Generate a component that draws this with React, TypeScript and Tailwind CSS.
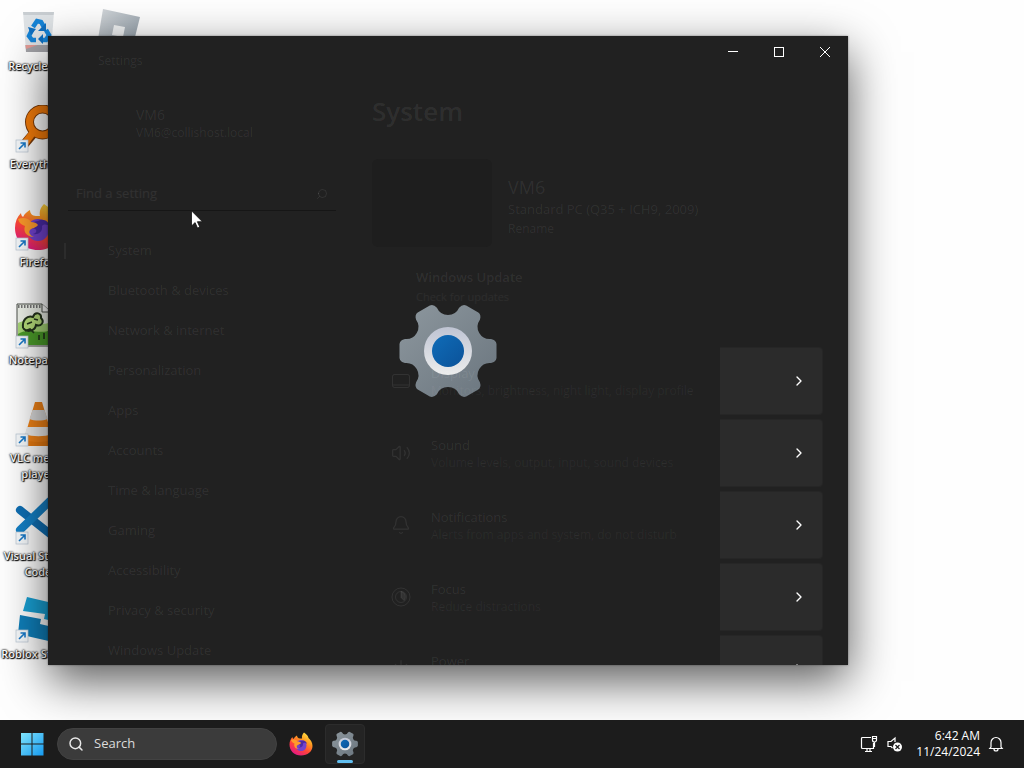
import type { ReactNode } from "react";
import { Bell, ChevronRight, Power, Search, Volume2 } from "lucide-react";

const GEAR_PATH = buildGearPath();

function buildGearPath() {
  const at = (x: number, y: number, turn: number) => {
    const a = (turn * Math.PI) / 3;
    const px = x * Math.cos(a) - y * Math.sin(a);
    const py = x * Math.sin(a) + y * Math.cos(a);
    return `${px.toFixed(2)} ${py.toFixed(2)}`;
  };
  let d = `M${at(43, -12, 0)}`;
  for (let k = 0; k < 6; k++) {
    d += `Q${at(48, -11, k)} ${at(48.5, -7, k)}L${at(48.5, 7, k)}Q${at(48, 11, k)} ${at(43, 12, k)}`;
    d += `A12.2 12.2 0 0 0 ${at(43, -12, k + 1)}`;
  }
  return d + "Z";
}

function Gear({ className, id }: { className: string; id: string }) {
  return (
    <svg viewBox="-49 -49 98 98" className={className} aria-hidden="true">
      <defs>
        <linearGradient id={`${id}-body`} x1="0" y1="0" x2="1" y2="1">
          <stop offset="0" stopColor="#8d979e" />
          <stop offset="1" stopColor="#6a757e" />
        </linearGradient>
        <linearGradient id={`${id}-ring`} x1="0" y1="0" x2="0" y2="1">
          <stop offset="0" stopColor="#bfc4d3" />
          <stop offset="1" stopColor="#eceded" />
        </linearGradient>
        <linearGradient id={`${id}-dot`} x1="0" y1="0" x2="1" y2="1">
          <stop offset="0" stopColor="#0f6cb8" />
          <stop offset="1" stopColor="#0b5299" />
        </linearGradient>
      </defs>
      <path d={GEAR_PATH} fill={`url(#${id}-body)`} />
      <circle r="24" fill={`url(#${id}-ring)`} />
      <circle r="16" fill={`url(#${id}-dot)`} />
    </svg>
  );
}

function Firefox({ className, id }: { className: string; id: string }) {
  return (
    <svg viewBox="0 0 48 48" className={className} aria-hidden="true">
      <defs>
        <linearGradient id={`${id}-fire`} x1="0.85" y1="0" x2="0.25" y2="1">
          <stop offset="0" stopColor="#fff04a" />
          <stop offset="0.35" stopColor="#ff9a20" />
          <stop offset="0.65" stopColor="#ff4538" />
          <stop offset="1" stopColor="#e0148c" />
        </linearGradient>
      </defs>
      <path
        d="M30 1c6 4 8 7 9 11 4 3 8 9 8 16 0 11-10 19-23 19S1 38 1 25c0-6 2-11 6-15 0 2 1 3 2 4 2-4 5-6 7-7 0 3 2 6 6 6h4c-1-5 1-9 4-12z"
        fill={`url(#${id}-fire)`}
      />
      <circle cx="24" cy="27" r="11" fill="#7142cf" />
      <path d="M24 18c5-3 11 0 12 6-3-3-6-3-8-1 1 6-4 9-9 8 4-1 4-4 2-5-3-1-6 0-8 2 0-5 4-9 11-10z" fill="#4b2ba8" />
      <path d="M4 16c5-2 11-1 13 3 3 0 6 1 7 3-2 3-6 3-8 5-2 3 1 6 4 7-8 0-11-6-9-11-3-1-6-3-7-7z" fill="#ff9b2b" />
    </svg>
  );
}

function ShortcutArrow() {
  return (
    <g>
      <rect x="2" y="35" width="12" height="12" fill="#f8fbfd" stroke="#b9c7d3" strokeWidth="0.7" />
      <path d="M5 44l6-6M6.5 38H11v4.500" fill="none" stroke="#1979c8" strokeWidth="1.600" />
    </g>
  );
}

function Glyph({ children }: { children: ReactNode }) {
  return (
    <svg viewBox="0 0 48 48" className="size-12" aria-hidden="true">
      {children}
    </svg>
  );
}

const desktopIcons: { id: string; label?: string; art: ReactNode }[] = [
  {
    id: "recycle",
    label: "Recycle Bin",
    art: (
      <Glyph>
        <path d="M9 5h31l-3 39H12z" fill="#dfe3e6" />
        <path d="M9 5h31l-.5 3H9.500z" fill="#c9ced2" />
        <path d="M11.500 38h26l-.5 7H12z" fill="#a3a3a8" />
        <path d="M11.500 38h12l-11.500 4z" fill="#e39a94" />
        <g fill="none" stroke="#1583d6" strokeWidth="4.500">
          <path d="M19 20l4-6 4 1 3 5" />
          <path d="M32 23l3 5-3 5h-5" />
          <path d="M22 33h-4l-3-4 3-6" />
        </g>
        <path d="M32 16v8h-8zM29 27v10l-5-5zM14 20l8 2-5 6z" fill="#0f6fc0" />
      </Glyph>
    ),
  },
  {
    id: "everything",
    label: "Everything",
    art: (
      <Glyph>
        <path d="M19 29L8 42" stroke="#7a3a08" strokeWidth="9" />
        <circle cx="28.500" cy="17" r="13" fill="none" stroke="#7a3a08" strokeWidth="9" />
        <circle cx="28.500" cy="17" r="13" fill="none" stroke="#f57c0a" strokeWidth="7" />
        <path d="M20 26L9 41" stroke="#f57c0a" strokeWidth="7" />
        <ShortcutArrow />
      </Glyph>
    ),
  },
  {
    id: "firefox",
    label: "Firefox",
    art: (
      <div className="relative">
        <Firefox className="size-12" id="ff-desktop" />
        <svg viewBox="0 0 48 48" className="absolute inset-0 size-12" aria-hidden="true">
          <ShortcutArrow />
        </svg>
      </div>
    ),
  },
  {
    id: "notepad",
    label: "Notepad++",
    art: (
      <Glyph>
        <path d="M3 3h25l9 8v34H3z" fill="#eef2ea" stroke="#4c504a" />
        <path d="M4 27c10-5 22 2 33-3v20H4z" fill="#4c9d2a" />
        <path d="M4 22c9-6 20 5 33-1v8c-12 5-22-3-33 4z" fill="#a9d878" />
        <path d="M4 5.500h24" stroke="#777" strokeWidth="3" strokeDasharray="1.500 1.500" />
        <path d="M28 3v8h9" fill="#fff" stroke="#4c504a" />
        <path d="M9 27c-1-8 4-13 10-11 2-6 9-4 8 1 4 4 0 9-5 7-1 6-9 8-13 3" fill="#b9e07c" stroke="#24331c" strokeWidth="2" />
        <path d="M13 23l5-2M20 18l4 1M11 30l5-2 4 4M25 34v5M30 32v6" stroke="#24331c" strokeWidth="1.600" fill="none" />
        <ShortcutArrow />
      </Glyph>
    ),
  },
  {
    id: "vlc",
    label: "VLC media player",
    art: (
      <Glyph>
        <path d="M9 35h32l5 12H8z" fill="#e77a10" />
        <path d="M21 3h7l11 37c-7 4-23 4-29 0z" fill="#f08318" />
        <path d="M18.500 11h12l3 9c-5 2-13 2-18 0z" fill="#d9d9d9" />
        <path d="M13 28h23l2 7c-7 3-20 3-27 0z" fill="#ededed" />
        <ShortcutArrow />
      </Glyph>
    ),
  },
  {
    id: "vscode",
    label: "Visual Studio Code",
    art: (
      <Glyph>
        <path d="M6 13l34 27" stroke="#0f6fb4" strokeWidth="8" strokeLinecap="round" />
        <path d="M6 33L36 4" stroke="#1480c6" strokeWidth="8" strokeLinecap="round" />
        <path d="M34 2l12 5v34l-12 5z" fill="#2a9df0" />
        <ShortcutArrow />
      </Glyph>
    ),
  },
  {
    id: "roblox-studio",
    label: "Roblox Studio",
    art: (
      <Glyph>
        <path d="M13 2l34 8-4 17-13-3 1-5-22-3z" fill="#18a0d4" />
        <path d="M6 20l21 4-1 5 17 4-4 14-35-8z" fill="#0f7fba" />
        <ShortcutArrow />
      </Glyph>
    ),
  },
  {
    id: "roblox-player",
    art: (
      <Glyph>
        <defs>
          <linearGradient id="player-face" x1="0" y1="0" x2="1" y2="1">
            <stop offset="0" stopColor="#d4d8db" />
            <stop offset="1" stopColor="#8b98a3" />
          </linearGradient>
        </defs>
        <path d="M9 2l37 8-9 36-34-8z" fill="url(#player-face)" />
        <path d="M20 18l11 2-2 10-11-2z" fill="#f2f4f5" />
      </Glyph>
    ),
  },
];

const navItems = [
  "System",
  "Bluetooth & devices",
  "Network & internet",
  "Personalization",
  "Apps",
  "Accounts",
  "Time & language",
  "Gaming",
  "Accessibility",
  "Privacy & security",
  "Windows Update",
];

const lineIcon = "size-5";

const settingRows: { title: string; note?: string; icon: ReactNode }[] = [
  {
    title: "Display",
    note: "Monitors, brightness, night light, display profile",
    icon: (
      <svg viewBox="0 0 20 20" className={lineIcon} fill="none" stroke="currentColor" aria-hidden="true">
        <rect x="1.500" y="3.500" width="17" height="13" rx="2" />
        <path d="M2 14h16" />
      </svg>
    ),
  },
  {
    title: "Sound",
    note: "Volume levels, output, input, sound devices",
    icon: <Volume2 className={lineIcon} strokeWidth={1.5} />,
  },
  {
    title: "Notifications",
    note: "Alerts from apps and system, do not disturb",
    icon: <Bell className={lineIcon} strokeWidth={1.5} />,
  },
  {
    title: "Focus",
    note: "Reduce distractions",
    icon: (
      <svg viewBox="0 0 20 20" className={lineIcon} fill="none" stroke="currentColor" aria-hidden="true">
        <circle cx="10" cy="10" r="9" />
        <circle cx="10" cy="10" r="5.500" />
        <path d="M10 4.500v6l3 3a5.500 5.500 0 0 0-3-9z" fill="currentColor" />
      </svg>
    ),
  },
  { title: "Power", icon: <Power className={lineIcon} strokeWidth={1.5} /> },
];

function WindowButton({ label, children }: { label: string; children: ReactNode }) {
  return (
    <button type="button" aria-label={label} className="grid h-8 w-[46px] place-items-center">
      <svg viewBox="0 0 12 12" className="size-3" fill="none" stroke="#fff">
        {children}
      </svg>
    </button>
  );
}

function SettingsWindow() {
  return (
    <section
      aria-label="Settings"
      className="absolute top-9 right-[176px] bottom-[55px] left-12 flex flex-col overflow-hidden bg-[#212121] text-[13px] text-white/8"
    >
      <div className="absolute inset-0 grid place-items-center">
        <Gear className="size-[98px]" id="gear-splash" />
      </div>

      <header className="relative flex h-12 shrink-0 items-start justify-between pl-[50px]">
        <span className="text-[12px] leading-[50px]">Settings</span>
        <div className="flex">
          <WindowButton label="Minimize">
            <path d="M1 5.500h10" />
          </WindowButton>
          <WindowButton label="Maximize">
            <rect x="1.500" y="1.500" width="9" height="9" />
          </WindowButton>
          <WindowButton label="Close">
            <path d="M1 1l10 10M11 1L1 11" />
          </WindowButton>
        </div>
      </header>

      <div className="relative flex min-h-0 flex-1">
        <aside className="flex w-72 shrink-0 flex-col pt-[21px] pl-5">
          <div className="pl-[68px]">
            <p className="text-[14px] leading-5">VM6</p>
            <p className="text-[12px] leading-4">VM6@collishost.local</p>
          </div>
          <label className="mt-9 flex h-[34px] shrink-0 items-center border-b border-[#161616] px-2">
            <input
              type="text"
              aria-label="Find a setting"
              placeholder="Find a setting"
              className="min-w-0 flex-1 bg-transparent outline-none placeholder:text-white/7"
            />
            <Search className="size-3 -scale-x-100" />
          </label>
          <nav className="mt-5 flex flex-col">
            {navItems.map((item, i) => (
              <a key={item} href="#" className="flex h-10 shrink-0 items-center">
                <span className={i === 0 ? "-ml-1 mr-[42px] h-4 w-0.5 bg-white/5" : "mr-10"} />
                {item}
              </a>
            ))}
          </nav>
        </aside>

        <main className="flex min-w-0 flex-1 flex-col pt-[9px] pr-[25px] pl-9">
          <h1 className="text-[26px] leading-9 font-semibold">System</h1>
          <div className="mt-[30px] flex shrink-0 items-end gap-4">
            <div className="h-[88px] w-[120px] rounded-md bg-[#1e1e1e]" />
            <div className="pb-2">
              <p className="text-[18px] leading-6">VM6</p>
              <p className="text-[13px] leading-5">Standard PC (Q35 + ICH9, 2009)</p>
              <a href="#" className="block text-[12px] leading-5">
                Rename
              </a>
            </div>
          </div>
          <div className="mt-5 shrink-0 pl-11">
            <p className="leading-5 font-semibold">Windows Update</p>
            <p className="text-[11px] leading-5 text-white/5">Check for updates</p>
          </div>
          <ul className="mt-10 flex flex-col gap-1">
            {settingRows.map(({ title, note, icon }) => (
              <li key={title} className="shrink-0">
                <a href="#" className="flex h-[68px] items-stretch justify-between">
                  <span className="flex min-w-0 flex-1 items-center gap-5 pl-[19px]">
                    {icon}
                    <span className="flex h-9 min-w-0 flex-col">
                      <span className="leading-5">{title}</span>
                      {note && (
                        <span className="text-[12px] leading-4 whitespace-nowrap text-white/6">{note}</span>
                      )}
                    </span>
                  </span>
                  <span className="flex w-[103px] shrink-0 items-center justify-end rounded-r border border-l-0 border-[#262626] bg-[#2b2b2b] pr-[15px] text-white">
                    <ChevronRight className="size-4" strokeWidth={2} />
                  </span>
                </a>
              </li>
            ))}
          </ul>
        </main>
      </div>
    </section>
  );
}

function Taskbar() {
  return (
    <footer className="flex h-12 shrink-0 items-center justify-between bg-[#1c1c1c] px-5 text-white">
      <div className="flex items-center">
        <button type="button" aria-label="Start">
          <svg viewBox="0 0 24 24" className="size-6" aria-hidden="true">
            <defs>
              <linearGradient id="start-tiles" x1="0" y1="0" x2="1" y2="1">
                <stop offset="0" stopColor="#7fe3fb" />
                <stop offset="1" stopColor="#169af0" />
              </linearGradient>
            </defs>
            <path
              d="M1 1h10.500v10.500H1zM12.500 1H23.500v10.500H12.500zM1 12.500h10.500V23.500H1zM12.500 12.500H23.500V23.500H12.500z"
              fill="url(#start-tiles)"
            />
          </svg>
        </button>
        <label className="ml-[13px] flex h-8 w-[220px] items-center gap-2.5 rounded-full border border-[#424242] bg-[#3b3b3b] px-2.5">
          <Search className="size-4 shrink-0 text-[#e8e8e8]" strokeWidth={2.2} />
          <input
            type="text"
            aria-label="Search"
            placeholder="Search"
            className="min-w-0 flex-1 bg-transparent text-[13px] outline-none placeholder:text-[#dcdcdc]"
          />
        </label>
        <button type="button" aria-label="Firefox" className="ml-3">
          <Firefox className="size-6" id="ff-task" />
        </button>
        <button
          type="button"
          aria-label="Settings"
          className="relative ml-3 grid size-10 place-items-center rounded border border-[#2c2c2c] bg-[#242424]"
        >
          <Gear className="size-[26px]" id="gear-task" />
          <span className="absolute bottom-0 h-[3px] w-4 rounded-full bg-[#62bff0]" />
        </button>
      </div>
      <div className="flex items-center">
        <svg viewBox="0 0 18 18" className="size-[18px]" fill="none" stroke="#fff" strokeWidth="1.200" aria-hidden="true">
          <path d="M11 2.500H2.500a1 1 0 0 0-1 1v9a1 1 0 0 0 1 1H13.500V8M5 16.500h7M7 13.500v3M10 13.500v3" />
          <path d="M12.500 1.500h4v3.500a2 2 0 0 1-4 0zM12.500 3.500h4M14.500 7v5" />
        </svg>
        <svg viewBox="0 0 18 18" className="ml-2 size-[18px]" fill="none" stroke="#fff" strokeWidth="1.200" aria-hidden="true">
          <path d="M9 7V3L5 6.500H2v5h3l1.500 1.500" />
          <circle cx="11.500" cy="12" r="4.500" fill="#fff" stroke="none" />
          <path d="M9.500 10l4 4M13.500 10l-4 4" stroke="#1c1c1c" />
        </svg>
        <div className="ml-3 text-right text-[12px] leading-4">
          <p>6:42 AM</p>
          <p>11/24/2024</p>
        </div>
        <button type="button" aria-label="Notifications" className="ml-2">
          <svg viewBox="0 0 16 16" className="size-4" fill="none" stroke="#fff" strokeWidth="1.200" aria-hidden="true">
            <path d="M3 11V6.500a5 5 0 0 1 10 0V11l1.200 1.500H1.800zM6 13a2 2 0 0 0 4 0" />
          </svg>
        </button>
      </div>
    </footer>
  );
}

export default function App() {
  return (
    <div className="flex h-screen flex-col overflow-hidden bg-[#fefefe] font-['Open_Sans','Noto_Sans',sans-serif]">
      <div className="relative min-h-0 flex-1 overflow-hidden">
        <ul className="relative grid w-40 auto-cols-[80px] grid-flow-col grid-rows-[repeat(7,98px)] pt-[7px]">
          {desktopIcons.map(({ id, label, art }) => (
            <li key={id} className="flex w-[76px] flex-col items-center gap-[3px]">
              {art}
              {label && (
                <span className="text-center text-[11px] leading-4 font-semibold text-white [text-shadow:0_0_2px_#000,0_0_2px_#000,1px_1px_1px_#000]">
                  {label}
                </span>
              )}
            </li>
          ))}
        </ul>
        <div className="absolute top-9 right-[176px] bottom-[55px] left-12 shadow-[0_16px_44px_rgba(0,0,0,0.65),0_0_2px_rgba(0,0,0,0.4)]" />
        <SettingsWindow />
        <svg viewBox="0 0 12 19" className="absolute top-[210px] left-[191px] h-[19px] w-3" aria-hidden="true">
          <path d="M.5.800v15.200l3.600-3.400 2.400 5.500 2.300-1-2.400-5.400h5z" fill="#fff" stroke="#111" strokeWidth="0.800" />
        </svg>
      </div>
      <Taskbar />
    </div>
  );
}
